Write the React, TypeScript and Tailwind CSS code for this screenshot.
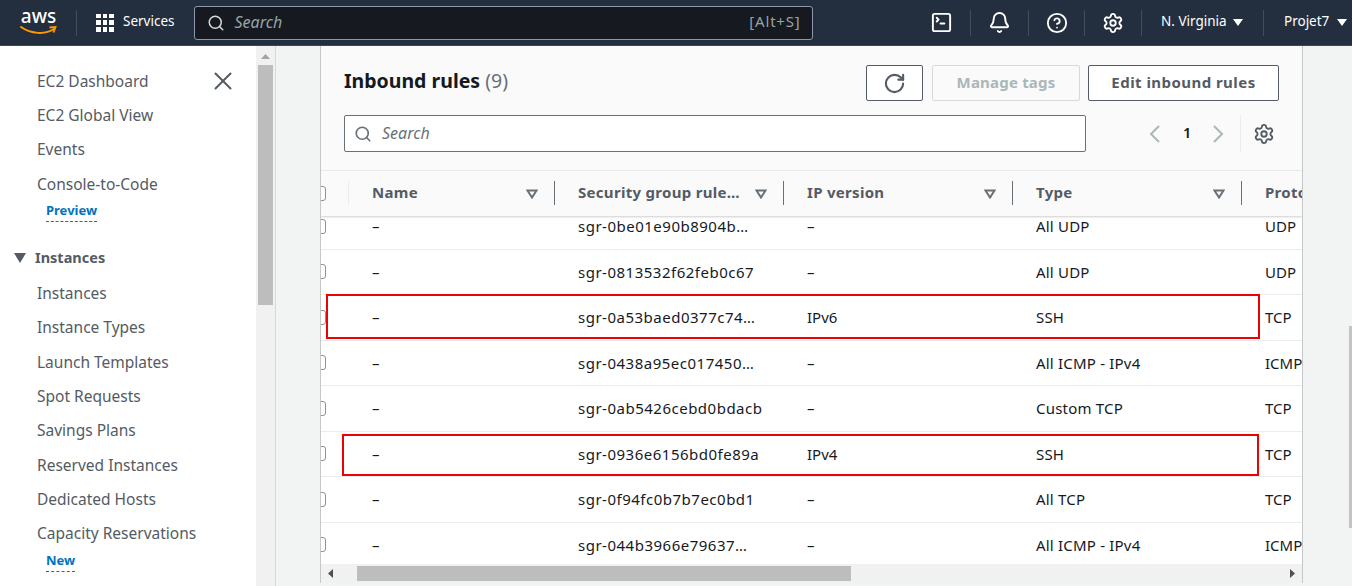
import { Bell, CircleHelp, RotateCw, Search, Settings, SquareTerminal, X } from "lucide-react";

const font = "font-['Noto_Sans','Open_Sans',sans-serif]";

const rows = [
  { name: "sgr-0be01e90b8904b…", ip: "–", type: "All UDP", proto: "UDP" },
  { name: "sgr-0813532f62feb0c67", ip: "–", type: "All UDP", proto: "UDP" },
  { name: "sgr-0a53baed0377c74…", ip: "IPv6", type: "SSH", proto: "TCP" },
  { name: "sgr-0438a95ec017450…", ip: "–", type: "All ICMP - IPv4", proto: "ICMP" },
  { name: "sgr-0ab5426cebd0bdacb", ip: "–", type: "Custom TCP", proto: "TCP" },
  { name: "sgr-0936e6156bd0fe89a", ip: "IPv4", type: "SSH", proto: "TCP" },
  { name: "sgr-0f94fc0b7b7ec0bd1", ip: "–", type: "All TCP", proto: "TCP" },
  { name: "sgr-044b3966e79637…", ip: "–", type: "All ICMP - IPv4", proto: "ICMP" },
];

const topLinks = ["EC2 Dashboard", "EC2 Global View", "Events", "Console-to-Code"];
const instanceLinks = ["Instances", "Instance Types", "Launch Templates", "Spot Requests", "Savings Plans", "Reserved Instances", "Dedicated Hosts", "Capacity Reservations"];

const FilterIcon = () => (
  <svg width="12" height="10" viewBox="0 0 12 10" className="shrink-0">
    <path d="M1.5 1.5h9L6 8.5z" fill="none" stroke="#687078" strokeWidth="2" strokeLinejoin="miter" />
  </svg>
);

const Caret = () => (
  <svg width="10" height="7" viewBox="0 0 10 7" className="shrink-0">
    <path d="M0 0h10L5 7z" fill="#fff" />
  </svg>
);

const Chevron = ({ flip }: { flip?: boolean }) => (
  <svg width="12" height="18" viewBox="0 0 12 18" className="shrink-0">
    <path d={flip ? "M2 1l8 8-8 8" : "M10 1L2 9l8 8"} fill="none" stroke="#aab7b8" strokeWidth="2" />
  </svg>
);

const NavLink = ({ label }: { label: string }) => (
  <div className="flex h-[34.35px] items-center pl-[37px] text-[15.5px] text-[#545b64]">{label}</div>
);

const Badge = ({ label }: { label: string }) => (
  <div className="ml-[46px] -mt-[1px] h-[22px] w-fit border-b border-dashed border-[#0073bb] text-[13px] font-bold leading-[20px] text-[#0073bb]">{label}</div>
);

const HeaderCell = ({ label, width }: { label: string; width: string }) => (
  <div className={`relative flex h-full shrink-0 items-center justify-between pl-[23px] pr-[17px] ${width}`}>
    <span className="mb-[3px] whitespace-nowrap text-[15px] font-bold tracking-[0.3px] text-[#545b64]">{label}</span>
    <FilterIcon />
    <div className="absolute right-0 top-[10px] bottom-[11px] w-px bg-[#687078]" />
  </div>
);

const Sidebar = () => (
  <aside className="relative flex h-full w-[256px] shrink-0 flex-col bg-white pt-[18px]">
    {topLinks.map((l) => (
      <NavLink key={l} label={l} />
    ))}
    <Badge label="Preview" />
    <div className="mt-[17px] flex h-[37px] items-center pl-[14px] text-[14.5px] font-bold text-[#545b64]">
      <svg width="12" height="10" viewBox="0 0 12 10" className="mr-[9px]">
        <path d="M0 0h12L6 10z" fill="#545b64" />
      </svg>
      Instances
    </div>
    {instanceLinks.map((l) => (
      <NavLink key={l} label={l} />
    ))}
    <Badge label="New" />
    <X size={30} strokeWidth={1.6} className="absolute left-[208px] top-[20px] text-[#545b64]" />
  </aside>
);

const TopDivider = () => <div className="h-[26px] w-px shrink-0 bg-[#414d5c]" />;

export default function App() {
  return (
    <div className={`flex h-[586px] w-[1352px] flex-col overflow-hidden bg-[#f2f3f3] ${font}`}>
      {/* Top bar */}
      <header className="flex h-[46px] shrink-0 items-center border-b border-[#3b4653] bg-[#232f3e] text-white">
        <div className="flex w-[76px] shrink-0 flex-col items-center pl-[1px]">
          <span className="-mt-[3px] h-[20px] text-[19px] font-medium leading-[20px] text-white">aws</span>
          <svg width="37" height="11" viewBox="0 0 37 11" className="-mt-[1px]">
            <path d="M1 2c10 7 24 8 33 2" fill="none" stroke="#ff9900" strokeWidth="2" strokeLinecap="round" />
            <path d="M29.5 2.5l6-.5-2 5.5" fill="none" stroke="#ff9900" strokeWidth="1.8" />
          </svg>
        </div>
        <TopDivider />
        <div className="ml-[19px] grid h-[18px] w-[18px] grid-cols-3 gap-[2px]">
          {Array.from({ length: 9 }).map((_, i) => (
            <div key={i} className="bg-white" />
          ))}
        </div>
        <span className="mb-[2px] ml-[9px] text-[13.5px]">Services</span>
        <div className="ml-[19px] flex h-[34px] w-[619px] items-center justify-between rounded-[3px] border border-[#8d99a8] bg-[#16191f] pl-[12px] pr-[11px]">
          <div className="flex items-center gap-[10px]">
            <Search size={18} strokeWidth={2} className="text-[#d5dbdb]" />
            <span className="mb-[2px] text-[16px] italic text-[#95a5a6]">Search</span>
          </div>
          <span className="mb-[2px] text-[15px] tracking-[0.8px] text-[#95a5a6]">[Alt+S]</span>
        </div>
        <div className="ml-auto flex h-full items-center">
          <div className="flex w-[57px] items-center justify-center">
            <SquareTerminal size={23} strokeWidth={2} />
          </div>
          <TopDivider />
          <div className="flex w-[57px] items-center justify-center">
            <Bell size={23} strokeWidth={2} />
          </div>
          <TopDivider />
          <div className="flex w-[55px] items-center justify-center">
            <CircleHelp size={22} strokeWidth={2} />
          </div>
          <TopDivider />
          <div className="flex w-[56px] items-center justify-center">
            <Settings size={22} strokeWidth={2} />
          </div>
          <TopDivider />
          <div className="flex w-[121px] items-center gap-[6px] pl-[19px] text-[13.5px]">
            <span className="mb-[2px]">N. Virginia</span> <Caret />
          </div>
          <TopDivider />
          <div className="flex w-[88px] items-center gap-[8px] pl-[20px] text-[13.5px]">
            <span className="mb-[2px]">Projet7</span> <Caret />
          </div>
        </div>
      </header>

      <div className="flex min-h-0 flex-1">
        <Sidebar />

        {/* Sidebar scrollbar */}
        <div className="flex h-full w-[20px] shrink-0 flex-col items-center border-r border-[#d5dbdb] bg-[#f1f1f1] pt-[8px]">
          <svg width="9" height="5" viewBox="0 0 9 5"><path d="M0 5h9L4.5 0z" fill="#a3a3a3" /></svg>
          <div className="mt-[6px] h-[240px] w-[15px] bg-[#bdbdbd]" />
        </div>

        {/* Main content */}
        <main className="flex min-w-0 flex-1 pl-[44px]">
          <div className="flex h-[537px] w-[983px] shrink-0 flex-col overflow-hidden border-x border-[#c4c8c8] bg-[#fafafa]">
            <div className="flex h-[125px] shrink-0 flex-col border-b border-[#eaeded] px-[23px]">
              <div className="mt-[19px] flex h-[36px] items-center justify-between">
                <h2 className="mb-[4px] text-[19.5px] font-bold text-[#16191f]">
                  Inbound rules <span className="font-normal text-[#687078]">(9)</span>
                </h2>
                <div className="flex items-center gap-[9px]">
                  <button className="flex h-[36px] w-[57px] items-center justify-center rounded-[2px] border border-[#545b64] bg-white text-[#545b64]">
                    <RotateCw size={23} strokeWidth={2.2} />
                  </button>
                  <button className="h-[36px] w-[148px] rounded-[2px] border border-[#d5dbdb] bg-[#fafafa] pb-[2px] text-[15px] font-bold tracking-[0.2px] text-[#aab7b8]">Manage tags</button>
                  <button className="-ml-[1px] h-[36px] w-[191px] rounded-[2px] border border-[#545b64] bg-white pb-[2px] text-[15px] font-bold tracking-[0.45px] text-[#545b64]">Edit inbound rules</button>
                </div>
              </div>
              <div className="mt-[14px] flex h-[37px] items-center">
                <div className="flex h-full w-[742px] items-center gap-[10px] rounded-[2px] border border-[#687078] bg-white pl-[9px]">
                  <Search size={18} strokeWidth={2.2} className="text-[#687078]" />
                  <span className="mb-[2px] text-[16px] italic text-[#687078]">Search</span>
                </div>
                <div className="ml-[63px]"><Chevron /></div>
                <span className="mb-[1px] ml-[22px] text-[14.5px] font-semibold text-[#16191f]">1</span>
                <div className="ml-[21px]"><Chevron flip /></div>
                <div className="ml-[16px] h-[37px] w-px bg-[#eaeded]" />
                <Settings size={22} strokeWidth={2} className="ml-[12px] text-[#545b64]" />
              </div>
            </div>

            {/* Table */}
            <div className="relative flex min-h-0 flex-1 flex-col bg-white">
              <div className="relative z-10 flex h-[45px] shrink-0 items-center bg-[#fafafa] shadow-[0_1px_2px_rgba(0,0,0,0.2)]">
                <div className="relative flex h-full w-[28px] shrink-0 items-center">
                  <div className="-ml-[8px] h-[15px] w-[13px] rounded-[3px] border border-[#879596] bg-white" />
                  <div className="absolute right-0 top-[10px] bottom-[11px] w-px bg-[#eaeded]" />
                </div>
                <HeaderCell label="Name" width="w-[206px]" />
                <HeaderCell label="Security group rule…" width="w-[229px]" />
                <HeaderCell label="IP version" width="w-[229px]" />
                <HeaderCell label="Type" width="w-[229px]" />
                <div className="flex h-full w-[61px] shrink-0 items-center overflow-hidden pb-[3px] pl-[23px] text-[15px] font-bold tracking-[0.3px] text-[#545b64]">Protocol</div>
              </div>
              <div className="min-h-0 flex-1 overflow-hidden">
                <div className="-mt-[12px]">
                  {rows.map((r) => (
                    <div key={r.name} className="flex h-[45.5px] items-center border-b border-[#eaeded] text-[15px] text-[#16191f]">
                      <div className="flex w-[28px] shrink-0 items-center">
                        <div className="-ml-[8px] h-[15px] w-[13px] rounded-[3px] border border-[#879596] bg-white" />
                      </div>
                      <div className="w-[206px] shrink-0 pl-[23px]">–</div>
                      <div className="w-[229px] shrink-0 whitespace-nowrap pl-[23px] tracking-[0.5px]">{r.name}</div>
                      <div className="w-[229px] shrink-0 pl-[23px]">{r.ip}</div>
                      <div className="w-[229px] shrink-0 pl-[23px] tracking-[0.2px]">{r.type}</div>
                      <div className="w-[62px] shrink-0 overflow-hidden pl-[23px]">{r.proto}</div>
                    </div>
                  ))}
                </div>
              </div>

              {/* Horizontal scrollbar */}
              <div className="flex h-[19px] shrink-0 items-center bg-[#f1f1f1]">
                <svg width="5" height="9" viewBox="0 0 5 9" className="ml-[7px]"><path d="M5 0v9L0 4.5z" fill="#505050" /></svg>
                <div className="ml-[24px] h-[15px] w-[494px] bg-[#bdbdbd]" />
                <svg width="5" height="9" viewBox="0 0 5 9" className="ml-[439px]"><path d="M0 0v9l5-4.5z" fill="#505050" /></svg>
              </div>

              {/* Red annotations drawn over the table */}
              <div className="pointer-events-none absolute left-[5px] top-[123px] h-[45px] w-[934px] border-2 border-[#f00000]" />
              <div className="pointer-events-none absolute left-[21px] top-[263px] h-[42px] w-[917px] border-2 border-[#f00000]" />
            </div>
          </div>
          {/* Page scrollbar */}
          <div className="ml-auto mt-[280px] h-[202px] w-[3px] bg-[#c4c4c4]" />
        </main>
      </div>
    </div>
  );
}
